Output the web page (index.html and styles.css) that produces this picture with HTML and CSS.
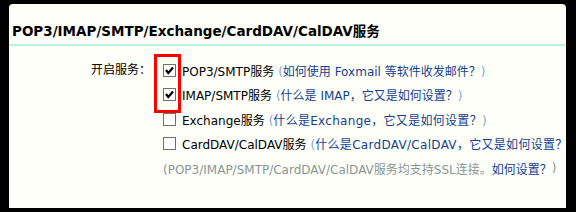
FILE: index.html
```html
<!DOCTYPE html>
<html>
	<head>
		<meta charset="UTF-8">
		<title>POP3/IMAP/SMTP服务</title>
		<link rel="stylesheet" href="styles.css">
	</head>
	<body>
		<div class="panel">
			<div class="title">POP3/IMAP/SMTP/Exchange/CardDAV/CalDAV服务</div>
			<div class="form">
				<div class="label">开启服务：</div>
				<div class="opts">
					<div class="mark"></div>
					<div class="row">
						<span class="cb"><svg width="11" height="11" viewBox="0 0 11 11"><path d="M2 5 L4.3 8 L9 2.5" fill="none" stroke="#000" stroke-width="2.2"/></svg></span>
						<span class="name">POP3/SMTP服务</span>
						<span class="tip">(<a href="javascript:;">如何使用 Foxmail 等软件收发邮件？</a>)</span>
					</div>
					<div class="row">
						<span class="cb"><svg width="11" height="11" viewBox="0 0 11 11"><path d="M2 5 L4.3 8 L9 2.5" fill="none" stroke="#000" stroke-width="2.2"/></svg></span>
						<span class="name">IMAP/SMTP服务</span>
						<span class="tip">(<a href="javascript:;">什么是 IMAP，它又是如何设置？</a>)</span>
					</div>
					<div class="row">
						<span class="cb"></span>
						<span class="name">Exchange服务</span>
						<span class="tip wide">(<a href="javascript:;">什么是Exchange，它又是如何设置？</a>)</span>
					</div>
					<div class="row">
						<span class="cb"></span>
						<span class="name">CardDAV/CalDAV服务</span>
						<span class="tip wide">(<a href="javascript:;">什么是CardDAV/CalDAV，它又是如何设置？</a>)</span>
					</div>
					<div class="row note">(POP3/IMAP/SMTP/CardDAV/CalDAV服务均支持SSL连接。 <a href="javascript:;">如何设置？</a>)</div>
				</div>
			</div>
		</div>
	</body>
</html>
```
FILE: styles.css
```css
html,body{
	margin: 0;
	padding: 0;
	background: #000;
}
body{
	padding: 4px 10px 4px 9px;
	font: 12px "DejaVu Sans", "Noto Sans CJK SC", sans-serif;
	color: #000;
}
a{
	text-decoration: none;
	color: #163f91;
}
.panel{
	background: #fdfff8;
	height: 204px;
	border-radius: 4px 4px 0 0;
	overflow: hidden;
	white-space: nowrap;
}
.title{
	padding-left: 3px;
	font-size: 13.5px;
	font-weight: bold;
	border-bottom: 2px solid #bdf1e4;
	box-sizing: border-box;
	height: 42px;
	line-height: 54px;
}
.form{
	display: flex;
	padding-top: 12px;
}
.label{
	flex: 0 0 142px;
	text-align: right;
	line-height: 24.5px;
	padding-right: 2px;
}
.opts{
	position: relative;
	padding-left: 10px;
	flex-shrink: 0;
}
.mark{
	position: absolute;
	left: 1px;
	top: -4px;
	width: 21px;
	height: 53px;
	border: 3px solid #f00;
}
.row{
	display: flex;
	align-items: center;
	height: 24.5px;
}
.cb{
	width: 11px;
	height: 11px;
	border: 1px solid #707070;
	background: #fff;
	margin-right: 6px;
	display: flex;
}
.tip{
	color: #7fa6d8;
	margin-left: 4px;
}
.wide a{
	letter-spacing: 0.3px;
}
.note{
	color: #8a9696;
}
```
